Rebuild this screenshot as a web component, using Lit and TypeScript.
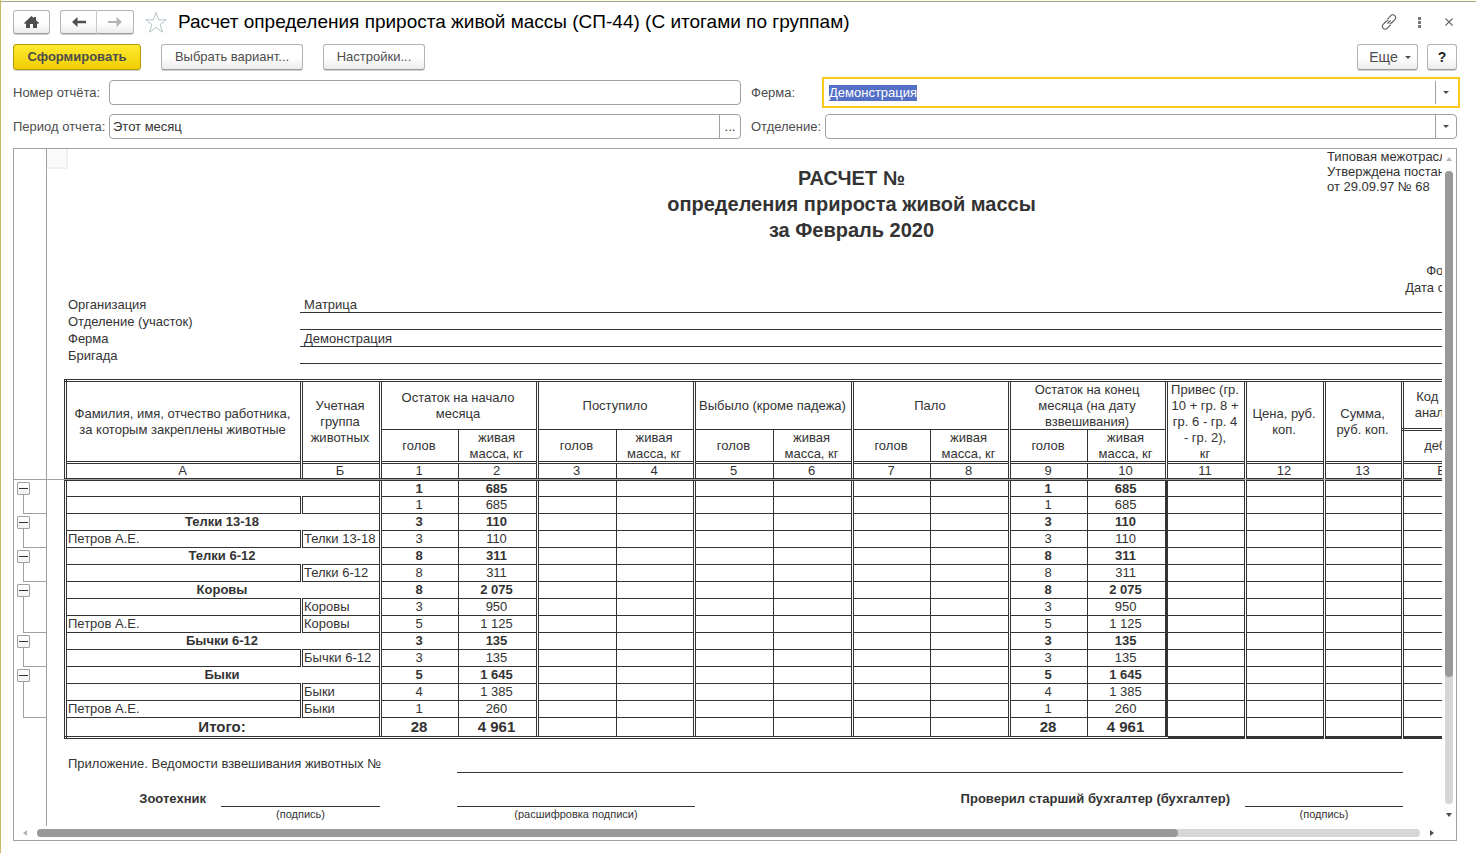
import { LitElement, html, css } from "lit";
import { customElement, query } from "lit/decorators.js";
import { classMap } from "lit/directives/class-map.js";

interface Row {
  kind: "group" | "detail" | "total";
  name?: string;
  group?: string;
  heads: string;
  mass: string;
}

const g = (name: string, heads: string, mass: string): Row => ({ kind: "group", name, heads, mass });
const d = (name: string, group: string, heads: string, mass: string): Row => ({ kind: "detail", name, group, heads, mass });

const GROUPS: Row[][] = [
  [g("", "1", "685"), d("", "", "1", "685")],
  [g("Телки 13-18", "3", "110"), d("Петров А.Е.", "Телки 13-18", "3", "110")],
  [g("Телки 6-12", "8", "311"), d("", "Телки 6-12", "8", "311")],
  [g("Коровы", "8", "2 075"), d("", "Коровы", "3", "950"), d("Петров А.Е.", "Коровы", "5", "1 125")],
  [g("Бычки 6-12", "3", "135"), d("", "Бычки 6-12", "3", "135")],
  [g("Быки", "5", "1 645"), d("", "Быки", "4", "1 385"), d("Петров А.Е.", "Быки", "1", "260")],
];
const TOTAL: Row = { kind: "total", name: "Итого:", heads: "28", mass: "4 961" };

@customElement("report-sheet")
export class ReportSheet extends LitElement {
  static styles = css`
    :host {
      display: block;
      min-width: 0;
      overflow: hidden;
      color: #333;
      font: 13px/16px "Liberation Sans", Arial, sans-serif;
    }
    .page { position: relative; width: 1600px; padding-left: 17px; }
    .corner {
      position: absolute; left: 0; top: 0; width: 19px; height: 18px;
      background: #fafafa; border: solid #f0f0f0; border-width: 0 2px 2px 0;
    }
    .top { display: grid; grid-template-columns: 236px 1024px 79px 1fr; height: 147px; }
    .title { grid-column: 2 / 4; grid-row: 1; padding-top: 16px; margin: 0; text-align: center; font-size: 20px; line-height: 26px; font-weight: bold; }
    .title span { display: block; }
    .approval { grid-column: 3 / 5; grid-row: 1; padding-left: 3px; line-height: 15px; white-space: nowrap; }
    .codes { grid-column: 3 / 5; grid-row: 1; align-self: end; text-align: right; line-height: 17px; padding-right: 150px; }
    .facts { display: grid; grid-template-columns: 236px 1fr; line-height: 16px; margin: 0; }
    .facts dt { padding: 1px 4px 0; }
    .facts dd { margin: 0; padding-left: 4px; border-bottom: 1px solid #333; height: 16px; line-height: 17px; }
    table { border-collapse: collapse; table-layout: fixed; width: 1496px; margin-top: 15px; }
    .wide { width: 236px; }
    .c78 { width: 78px; }
    .c79 { width: 79px; }
    th, td { padding: 0 2px 0 0; border: 1px solid #333; text-align: center; font-weight: normal; overflow: hidden; }
    th { padding: 0 4px 0 2px; }
    th span { display: block; margin: -2px 0; }
    thead tr.h1 { height: 49px; }
    thead tr.h2 { height: 33px; }
    thead tr.nums { height: 17px; }
    thead tr.nums th { border-top: 3px double #333; border-bottom: 3px double #333; line-height: 12px; }
    thead tr.nums th.heavyb { border-bottom: 3px solid #333; }
    thead tr.h1 th { border-top: 3px double #333; }
    tbody tr { height: 17px; }
    tbody td { line-height: 14px; }
    .dl { border-left: 3px double #333; }
    thead tr.h1 th.db { border-bottom: 3px double #333; }
    td.left { text-align: left; padding: 0 0 0 1px; white-space: nowrap; }
    .group td { font-weight: bold; }
    tbody tr.total { height: 20px; }
    .total td { font-weight: bold; font-size: 15px; line-height: 16px; border-bottom: 3px double #333; }
    td.heavyl { border-left: 3px solid #333; }
    .total td.heavyt { border-bottom: 3px solid #333; }
    .freeze { position: absolute; left: 0; right: 0; top: 330px; height: 1px; background: #a0a0a0; }
    .foot { display: grid; grid-template-columns: 157px 159px 77px 238px 550px 158px; margin-top: 15px; }
    .note { grid-column: 1 / 4; padding: 2px 4px 0; height: 17px; line-height: 16px; }
    .line { border-bottom: 1px solid #333; }
    .long { grid-column: 4 / 7; }
    .sign { padding: 18px 15px 0 0; text-align: right; font-weight: bold; height: 16px; }
    .cap { font-size: 11px; line-height: 14px; text-align: center; }
    .s2 { grid-column: 2; }
    .s4 { grid-column: 4; }
    .s5 { grid-column: 5; }
    .s6 { grid-column: 6; }
  `;

  private row(r: Row) {
    const cls = { group: r.kind === "group", total: r.kind === "total" };
    return html`<tr class=${classMap(cls)}>
      ${r.kind === "detail"
        ? html`<td class="dl left">${r.name}</td><td class="dl left">${r.group}</td>`
        : html`<td class="dl" colspan="2">${r.name}</td>`}
      <td class="dl">${r.heads}</td><td>${r.mass}</td>
      <td class="dl"></td><td></td>
      <td class="dl"></td><td></td>
      <td class="dl"></td><td></td>
      <td class="dl">${r.heads}</td><td>${r.mass}</td>
      <td class="heavyl heavyt"></td>
      <td class="dl heavyt"></td>
      <td class="dl heavyt"></td>
      <td class="dl heavyt"></td>
      <td class="heavyt"></td>
    </tr>`;
  }

  render() {
    const pairs = ["Остаток на начало месяца", "Поступило", "Выбыло (кроме падежа)", "Пало", "Остаток на конец месяца (на дату взвешивания)"];
    const nums = ["А", "Б", "1", "2", "3", "4", "5", "6", "7", "8", "9", "10", "11", "12", "13", "В", "Г"];
    const single = new Set([3, 5, 7, 9, 11, 16]);
    const widths = ["wide", "c79", "c78", "c79", "c79", "c78", "c79", "c79", "c78", "c79", "c78", "c79", "c79", "c79", "c78", "c79"];
    return html`
      <div class="page">
        <div class="corner"></div>
        <div class="top">
          <h2 class="title"><span>РАСЧЕТ №</span><span>определения прироста живой массы</span><span>за Февраль 2020</span></h2>
          <div class="approval">Типовая межотраслевая форма № СП-44<br />Утверждена постановлением Госкомстата<br />от 29.09.97 № 68</div>
          <div class="codes">Форма по КНД<br />Дата составления</div>
        </div>
        <dl class="facts">
          <dt>Организация</dt><dd>Матрица</dd>
          <dt>Отделение (участок)</dt><dd></dd>
          <dt>Ферма</dt><dd>Демонстрация</dd>
          <dt>Бригада</dt><dd></dd>
        </dl>
        <table>
          <colgroup>${widths.map((w) => html`<col class=${w} />`)}<col /></colgroup>
          <thead>
            <tr class="h1">
              <th class="dl" rowspan="2"><span>Фамилия, имя, отчество работника, за которым закреплены животные</span></th>
              <th class="dl" rowspan="2"><span>Учетная группа животных</span></th>
              ${pairs.map((p) => html`<th class="dl" colspan="2"><span>${p}</span></th>`)}
              <th class="dl" rowspan="2"><span>Привес (гр. 10 + гр. 8 + гр. 6 - гр. 4 - гр. 2),<br />кг</span></th>
              <th class="dl" rowspan="2"><span>Цена, руб. коп.</span></th>
              <th class="dl" rowspan="2"><span>Сумма, руб. коп.</span></th>
              <th class="dl db" colspan="2"><span>Код синтетического и аналитического учета</span></th>
            </tr>
            <tr class="h2">
              ${pairs.map(() => html`<th class="dl"><span>голов</span></th><th><span>живая масса, кг</span></th>`)}
              <th class="dl"><span>дебет</span></th><th><span>кредит</span></th>
            </tr>
            <tr class="nums">${nums.map((n, i) => html`<th class=${classMap({ dl: !single.has(i), heavyb: i >= 12 })}>${n}</th>`)}</tr>
          </thead>
          <tbody>
            ${GROUPS.flat().map((r) => this.row(r))}
            ${this.row(TOTAL)}
          </tbody>
        </table>
        <div class="freeze"></div>
        <div class="foot">
          <div class="note">Приложение. Ведомости взвешивания животных №</div>
          <div class="line long"></div>
          <div class="sign">Зоотехник</div>
          <div class="line s2"></div>
          <div class="line s4"></div>
          <div class="sign s5">Проверил старший бухгалтер (бухгалтер)</div>
          <div class="line s6"></div>
          <div class="cap s2">(подпись)</div>
          <div class="cap s4">(расшифровка подписи)</div>
          <div class="cap s6">(подпись)</div>
        </div>
      </div>
    `;
  }
}

@customElement("app-root")
export class AppRoot extends LitElement {
  static styles = css`
    :host {
      display: block;
      color: #4d4d4d;
      font: 13px/16px "Liberation Sans", Arial, sans-serif;
    }
    * { box-sizing: border-box; }
    .window {
      display: flex; flex-direction: column; height: 100vh; min-height: 400px;
      border-left: 1px solid #cdb867; background: #fff; padding: 0 19px 12px 12px;
    }
    .strip { height: 3px; margin: 0 -19px 0 -12px; background: linear-gradient(#ffffd9 1px, #a0a0a0 1px, #a0a0a0 2px, #fff 2px); flex: none; }
    button, input { font: inherit; color: inherit; margin: 0; }
    button { padding: 0; }
    .btn {
      height: 26px; border: 1px solid #b4b4b4; border-bottom-color: #9b9b9b; border-radius: 3px;
      background: linear-gradient(#fff 50%, #ececec); box-shadow: 0 1px 0 #d0d0d0;
      display: flex; align-items: center; justify-content: center;
    }
    .head { display: flex; align-items: center; height: 38px; }
    .home { width: 37px; height: 24px; }
    .nav { display: flex; margin-left: 10px; }
    .nav .btn { width: 37px; height: 24px; }
    .nav .back { border-radius: 3px 0 0 3px; border-right-color: #c8c8c8; }
    .nav .fwd { border-radius: 0 3px 3px 0; border-left: 0; }
    .plain { border: 0; background: none; display: flex; align-items: center; justify-content: center; }
    .star { width: 24px; height: 24px; margin-left: 10px; }
    h1 { margin: 0 0 0 10px; font-size: 19px; line-height: 24px; font-weight: normal; color: #000; flex: 1; white-space: nowrap; }
    .tools { display: flex; gap: 6px; margin-right: -4px; }
    .tools .plain { width: 24px; height: 24px; }
    .bar { display: flex; gap: 20px; margin-top: 3px; }
    .primary { width: 128px; font-weight: bold; background: linear-gradient(#ffe931, #f0cf00); border-color: #b39b00; }
    .variant { width: 142px; }
    .settings { width: 102px; }
    .right { margin-left: auto; display: flex; gap: 9px; }
    .more { width: 61px; gap: 7px; padding-left: 5px; font-size: 14px; }
    .help { width: 30px; font-weight: bold; color: #222; font-size: 14px; }
    .fields { display: grid; grid-template-columns: 96px 1fr 84px 1fr; row-gap: 9px; align-items: center; margin-top: 10px; }
    .second { padding-left: 10px; }
    .field { display: flex; height: 25px; border: 1px solid #a0a0a0; border-radius: 4px; background: #fff; color: #333; }
    .field input { flex: 1; min-width: 0; border: 0; outline: 0; background: none; padding: 0 3px; }
    .field button { width: 21px; border: 0; border-left: 1px solid #a0a0a0; background: none; display: flex; align-items: center; justify-content: center; }
    .active { border-color: transparent; outline: 2px solid #fbc81e; outline-offset: 1px; border-radius: 0; }
    .active input::selection { background: #5470c6; color: #fff; }
    .panel {
      flex: 1; min-height: 0; margin-top: 9px; border: 1px solid #a0a0a0;
      display: grid; grid-template-columns: 33px minmax(0, 1fr) 14px; grid-template-rows: minmax(0, 1fr) 14px;
    }
    .gutter { border-right: 1px solid #a0a0a0; overflow: hidden; }
    .fixed { height: 331px; border-bottom: 1px solid #a0a0a0; }
    .node { display: grid; grid-template-columns: 9px 1fr; padding-top: 2px; }
    .n2 { height: 34px; }
    .n3 { height: 51px; }
    .toggle { grid-column: 1 / 3; width: 13px; height: 13px; margin-left: 3px; border: 1px solid #a0a0a0; border-radius: 1px; background: linear-gradient(#fff, #f2f2f2); display: flex; align-items: center; justify-content: center; }
    .toggle::before { content: ""; width: 9px; height: 1px; background: #333; }
    .stem { grid-column: 2; border: solid #a0a0a0; border-width: 0 0 1px 1px; }
    .n2 .stem { height: 19px; }
    .n3 .stem { height: 36px; }
    .vbar { display: flex; flex-direction: column; align-items: center; padding: 8px 0 9px; }
    .vtrack { flex: 1; width: 8px; margin: 10px 0 9px; border-radius: 4px; background: #d6d6d6; }
    .vthumb { height: 80%; border-radius: 4px; background: #999; }
    .hbar { grid-column: 1 / 4; display: flex; align-items: center; padding: 0 22px 0 9px; }
    .htrack { flex: 1; height: 8px; margin: 0 10px 0 10px; border-radius: 4px; background: #d6d6d6; }
    .hthumb { width: 82.5%; height: 8px; border-radius: 4px; background: #999; }
    svg { display: block; flex: none; }
  `;

  @query("#farm") private farm!: HTMLInputElement;

  firstUpdated() {
    this.farm.focus();
    this.farm.select();
  }

  private caret = html`<svg width="6" height="3" viewBox="0 0 6 3"><path d="M0 0h6L3 3z" fill="#4d4d4d" /></svg>`;

  render() {
    return html`
      <div class="window">
        <div class="strip"></div>
        <header class="head">
          <button class="btn home" aria-label="Домой">
            <svg width="15" height="12" viewBox="0 0 15 12"><path d="M7.500 0L10 2.300V1h2v3.200L15 7l-.7.800H13V12H9V8H6v4H2V7.800H.7L0 7z" fill="#4d4d4d" /></svg>
          </button>
          <div class="nav">
            <button class="btn back" aria-label="Назад">
              <svg width="14" height="10" viewBox="0 0 14 10"><path d="M0 5L5.500 0v3.800H14v2.400H5.500V10z" fill="#4d4d4d" /></svg>
            </button>
            <button class="btn fwd" aria-label="Вперед">
              <svg width="14" height="10" viewBox="0 0 14 10"><path d="M14 5L8.500 0v4H0v2h8.500v4z" fill="#b4b4b4" /></svg>
            </button>
          </div>
          <button class="plain star" aria-label="Избранное">
            <svg width="24" height="23" viewBox="0 0 24 23"><path d="M12 1.500l2.700 7.300h7.600l-6.100 4.700 2.400 7.700L12 16.500l-6.600 4.700 2.400-7.700-6.100-4.700h7.600z" fill="none" stroke="#b5c3c9" /></svg>
          </button>
          <h1>Расчет определения прироста живой массы (СП-44) (С итогами по группам)</h1>
          <div class="tools">
            <button class="plain" aria-label="Ссылка">
              <svg width="16" height="16" viewBox="0 0 16 16"><g fill="none" stroke="#5a5a5a" stroke-width="1.100"><path d="M6.200 5.300l3.600-3.600a2.700 2.700 0 0 1 4 0 2.700 2.700 0 0 1 0 4L11 8.500a2.700 2.700 0 0 1-2.500.700" /><path d="M9.800 10.700l-3.600 3.600a2.700 2.700 0 0 1-4 0 2.700 2.700 0 0 1 0-4L5 7.500a2.700 2.700 0 0 1 2.500-.700M6.300 9.700l3.400-3.400" /></g></svg>
            </button>
            <button class="plain" aria-label="Меню">
              <svg width="3" height="11" viewBox="0 0 3 11"><path d="M0 0h3v3H0zM0 4h3v3H0zM0 8h3v3H0z" fill="#777" /></svg>
            </button>
            <button class="plain" aria-label="Закрыть">
              <svg width="8" height="8" viewBox="0 0 8 8"><path d="M.5.5l7 7m0-7l-7 7" stroke="#666" stroke-width="1.100" /></svg>
            </button>
          </div>
        </header>
        <div class="bar">
          <button class="btn primary">Сформировать</button>
          <button class="btn variant">Выбрать вариант...</button>
          <button class="btn settings">Настройки...</button>
          <div class="right">
            <button class="btn more">Еще ${this.caret}</button>
            <button class="btn help">?</button>
          </div>
        </div>
        <div class="fields">
          <label for="number">Номер отчёта:</label>
          <div class="field"><input id="number" type="text" /></div>
          <label class="second" for="farm">Ферма:</label>
          <div class="field active"><input id="farm" type="text" value="Демонстрация" /><button aria-label="Выбрать ферму">${this.caret}</button></div>
          <label for="period">Период отчета:</label>
          <div class="field"><input id="period" type="text" value="Этот месяц" /><button aria-label="Выбрать период">...</button></div>
          <label class="second" for="dept">Отделение:</label>
          <div class="field"><input id="dept" type="text" /><button aria-label="Выбрать отделение">${this.caret}</button></div>
        </div>
        <main class="panel">
          <div class="gutter">
            <div class="fixed"></div>
            ${GROUPS.map((rows) => html`<div class="node n${rows.length}"><button class="toggle" aria-label="Свернуть"></button><div class="stem"></div></div>`)}
          </div>
          <report-sheet></report-sheet>
          <div class="vbar">
            <svg width="6" height="4" viewBox="0 0 6 4"><path d="M0 4h6L3 0z" fill="#b4b4b4" /></svg>
            <div class="vtrack"><div class="vthumb"></div></div>
            <svg width="6" height="4" viewBox="0 0 6 4"><path d="M0 0h6L3 4z" fill="#4d4d4d" /></svg>
          </div>
          <div class="hbar">
            <svg width="4" height="6" viewBox="0 0 4 6"><path d="M4 0v6L0 3z" fill="#b4b4b4" /></svg>
            <div class="htrack"><div class="hthumb"></div></div>
            <svg width="4" height="6" viewBox="0 0 4 6"><path d="M0 0v6l4-3z" fill="#4d4d4d" /></svg>
          </div>
        </main>
      </div>
    `;
  }
}
